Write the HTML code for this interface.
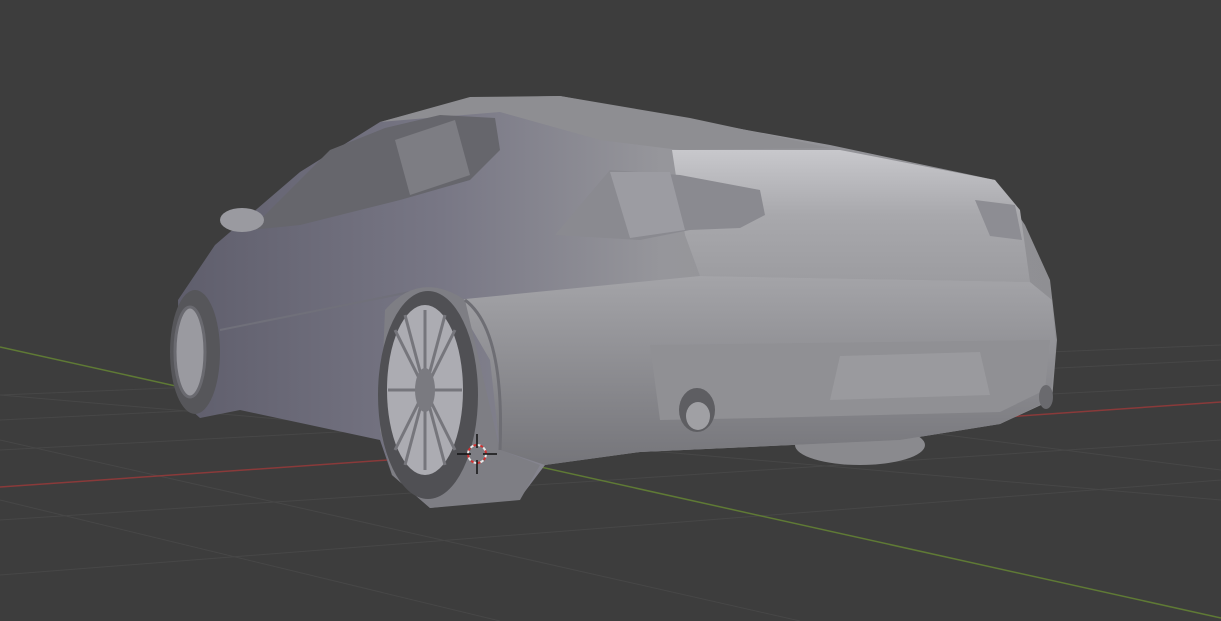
<!DOCTYPE html>
<html><head><meta charset="utf-8"><style>
html,body{margin:0;padding:0;background:#3d3d3d;overflow:hidden}
svg{display:block}
</style></head><body>
<svg width="1221" height="621" viewBox="0 0 1221 621" xmlns="http://www.w3.org/2000/svg">
<defs>
<linearGradient id="body" x1="0" y1="0" x2="1" y2="0">
<stop offset="0" stop-color="#5f5e6c"/><stop offset="0.3" stop-color="#787785"/><stop offset="0.55" stop-color="#96969b"/><stop offset="1" stop-color="#8f8f93"/></linearGradient>
<linearGradient id="trunk" x1="0" y1="0" x2="0" y2="1">
<stop offset="0" stop-color="#c8c8cc"/><stop offset="0.5" stop-color="#a8a8ac"/><stop offset="1" stop-color="#9c9ca0"/></linearGradient>
<linearGradient id="bump" x1="0" y1="0" x2="0" y2="1">
<stop offset="0" stop-color="#a4a4a8"/><stop offset="1" stop-color="#75757a"/></linearGradient>
</defs>
<rect width="1221" height="621" fill="#3d3d3d"/>
<g stroke="#474747" stroke-width="1">
<line x1="0" y1="420" x2="1221" y2="360"/><line x1="0" y1="450" x2="1221" y2="385"/>
<line x1="0" y1="520" x2="1221" y2="440"/><line x1="0" y1="575" x2="1221" y2="480"/>
<line x1="0" y1="395" x2="1221" y2="345"/>
<line x1="0" y1="395" x2="1221" y2="500"/><line x1="0" y1="440" x2="800" y2="621"/>
<line x1="200" y1="340" x2="1221" y2="470"/><line x1="0" y1="500" x2="500" y2="621"/>
</g>
<line x1="0" y1="487" x2="1221" y2="402" stroke="#8a3a3a" stroke-width="1.5"/>
<line x1="0" y1="347" x2="1221" y2="618" stroke="#5f7a35" stroke-width="1.5"/>
<ellipse cx="860" cy="445" rx="65" ry="20" fill="#8a8a8e"/>
<path d="M178,300 L215,245 L300,172 L380,122 L470,98 L560,96 L680,118 L830,145 L995,180 L1025,225 L1050,280 L1057,340 L1052,400 L1000,424 L900,440 L640,452 L545,465 L520,498 L430,508 L392,475 L380,440 L240,410 L200,418 L180,400 Z" fill="url(#body)"/>
<path d="M380,122 L470,97 L560,96 L690,118 L830,148 L680,150 L600,140 L500,112 Z" fill="#8e8e92"/>
<path d="M250,230 L330,150 L385,128 L440,115 L495,118 L500,150 L470,180 L400,200 L300,225 Z" fill="#66666c"/>
<path d="M395,140 L455,120 L470,175 L410,195 Z" fill="#7d7d83"/>
<path d="M672,150 L840,150 L995,180 L1020,210 L1030,282 L700,276 L685,235 Z" fill="url(#trunk)"/>
<path d="M555,235 L610,170 L680,175 L760,190 L765,215 L740,228 L690,230 L640,240 Z" fill="#8a8a90"/>
<path d="M610,172 L670,172 L685,230 L630,238 Z" fill="#9c9ca2"/>
<path d="M975,200 L1015,205 L1022,240 L990,236 Z" fill="#8d8d93"/>
<path d="M455,300 L700,276 L1030,282 L1052,300 L1056,345 L1050,400 L1000,424 L900,440 L640,452 L545,465 L500,450 L490,360 Z" fill="url(#bump)"/>
<path d="M650,345 L1050,340 L1045,390 L1000,412 L760,418 L660,420 Z" fill="#909094"/>
<path d="M840,356 L980,352 L990,395 L830,400 Z" fill="#9a9a9e"/>
<ellipse cx="697" cy="410" rx="18" ry="22" fill="#5e5e62"/>
<ellipse cx="698" cy="416" rx="12" ry="14" fill="#a0a0a4"/>
<ellipse cx="1046" cy="397" rx="7" ry="12" fill="#6a6a6e"/>
<path d="M220,330 L420,290 L460,300" stroke="#70707a" stroke-width="2" fill="none"/>
<ellipse cx="242" cy="220" rx="22" ry="12" fill="#9a9aa0"/>
<ellipse cx="195" cy="352" rx="25" ry="62" fill="#56565a"/>
<ellipse cx="190" cy="352" rx="15" ry="45" fill="#9a9aa0" stroke="#6a6a70" stroke-width="3"/>
<path d="M385,310 Q420,270 465,300 L500,450 L540,465 L520,500 L430,508 L392,475 L380,430 Z" fill="#7e7e84"/>
<ellipse cx="428" cy="395" rx="50" ry="104" fill="#505054"/>
<ellipse cx="425" cy="390" rx="38" ry="85" fill="#acacb2"/>
<g stroke="#76767c" stroke-width="3">
<line x1="425" y1="310" x2="425" y2="470"/><line x1="395" y1="330" x2="455" y2="450"/>
<line x1="395" y1="450" x2="455" y2="330"/><line x1="388" y1="390" x2="462" y2="390"/>
<line x1="405" y1="315" x2="445" y2="465"/><line x1="445" y1="315" x2="405" y2="465"/>
</g>
<ellipse cx="425" cy="390" rx="10" ry="22" fill="#7a7a80"/>
<path d="M465,300 Q505,330 500,450" stroke="#6e6e74" stroke-width="3" fill="none"/>
<g transform="translate(477,454)">
<circle r="9" fill="none" stroke="#e8e8e8" stroke-width="2" stroke-dasharray="4 3"/>
<circle r="9" fill="none" stroke="#d03030" stroke-width="2" stroke-dasharray="3 4" stroke-dashoffset="3.5"/>
<line x1="0" y1="-20" x2="0" y2="-6" stroke="#111" stroke-width="1.5"/>
<line x1="0" y1="6" x2="0" y2="20" stroke="#111" stroke-width="1.5"/>
<line x1="-20" y1="0" x2="-6" y2="0" stroke="#111" stroke-width="1.5"/>
<line x1="6" y1="0" x2="20" y2="0" stroke="#111" stroke-width="1.5"/>
</g>
</svg>
</body></html>
